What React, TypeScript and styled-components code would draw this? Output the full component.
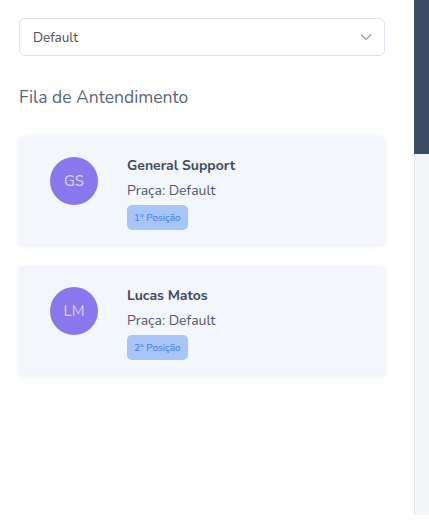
import React from "react";
import styled, { createGlobalStyle } from "styled-components";

const Global = createGlobalStyle`
  html, body { margin: 0; padding: 0; background: #ffffff; }
  body { font-family: "Nunito", "Lato", "Open Sans", sans-serif; }
  * { box-sizing: border-box; }
`;

const Page = styled.div`
  display: flex;
  width: 429px;
  height: 523px;
  overflow: hidden;
`;

const Main = styled.div`
  width: 414px;
  padding: 18px 29px 0 19px;
  display: flex;
  flex-direction: column;
`;

const SelectBox = styled.div`
  height: 38px;
  border: 1px solid #dde3ec;
  border-radius: 6px;
  display: flex;
  align-items: center;
  justify-content: space-between;
  padding: 0 12px 0 13px;
  font-size: 13.5px;
  color: #495057;
`;

const Heading = styled.div`
  margin-top: 31px;
  font-size: 17.5px;
  color: #5b6578;
  line-height: 20px;
`;

const List = styled.div`
  margin-top: 29px;
  display: flex;
  flex-direction: column;
  gap: 21px;
`;

const Card = styled.div`
  height: 109px;
  background: #f3f6fb;
  border-radius: 4px;
  box-shadow: 0 1px 4px rgba(40, 60, 100, 0.1);
  display: flex;
  align-items: flex-start;
  padding: 21px 0 0 31px;
  gap: 29px;
`;

const Avatar = styled.div`
  width: 48px;
  height: 48px;
  border-radius: 50%;
  background: #8b77ed;
  color: #d9d4fb;
  display: flex;
  align-items: center;
  justify-content: center;
  font-size: 15px;
`;

const Info = styled.div`
  display: flex;
  flex-direction: column;
`;

const Name = styled.div`
  font-size: 14px;
  font-weight: 700;
  color: #3f4a5e;
  line-height: 18px;
`;

const Place = styled.div`
  margin-top: 7px;
  font-size: 14px;
  color: #4f596c;
  line-height: 18px;
`;

const Badge = styled.div`
  margin-top: 5px;
  align-self: flex-start;
  height: 25px;
  padding: 0 7px;
  border-radius: 5px;
  background: #a9c4f6;
  color: #3b7cf1;
  font-size: 10px;
  display: flex;
  align-items: center;
`;

const Side = styled.div`
  width: 15px;
  display: flex;
  flex-direction: column;
`;

const SideTop = styled.div`
  height: 154px;
  background: #3a4a64;
`;

const SideBody = styled.div`
  height: 361px;
  background: #f3f6f9;
  border-left: 1px solid #e4e9f1;
`;

const items = [
  { initials: "GS", name: "General Support", pos: "1° Posição" },
  { initials: "LM", name: "Lucas Matos", pos: "2° Posição" },
];

export default function App() {
  return (
    <Page>
      <Global />
      <Main>
        <SelectBox>
          <span>Default</span>
          <svg width="12" height="8" viewBox="0 0 12 8" fill="none">
            <path d="M1 1.5 6 6.5 11 1.5" stroke="#8a96a8" strokeWidth="1.2" />
          </svg>
        </SelectBox>
        <Heading>Fila de Antendimento</Heading>
        <List>
          {items.map((it) => (
            <Card key={it.initials}>
              <Avatar>{it.initials}</Avatar>
              <Info>
                <Name>{it.name}</Name>
                <Place>Praça: Default</Place>
                <Badge>{it.pos}</Badge>
              </Info>
            </Card>
          ))}
        </List>
      </Main>
      <Side>
        <SideTop />
        <SideBody />
      </Side>
    </Page>
  );
}
